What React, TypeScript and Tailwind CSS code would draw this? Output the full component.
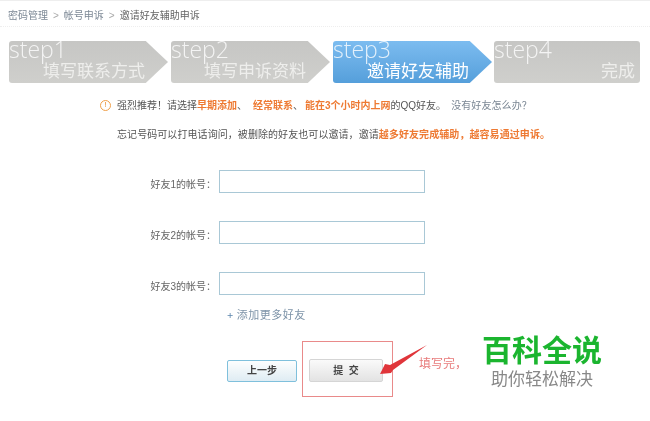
const cjk = "font-['Liberation_Sans','Noto_Sans_CJK_SC',sans-serif]";

const Step = ({ name, label, active, last, width, labelPos }: any) => {
  return (
    <div
      className={`relative h-[42px] shrink-0 overflow-hidden rounded-[3px] text-white ${width} ${
        last ? "" : "[clip-path:polygon(0_0,86%_0,100%_50%,86%_100%,0_100%)]"
      } ${active ? "bg-gradient-to-b from-[#7cbcf0] to-[#559fdb]" : "bg-gradient-to-b from-[#c6c6c4] to-[#cfcfcc]"}`}
    >
      <div className="absolute left-0 top-0 text-[23px] leading-[17px] font-['Open_Sans',sans-serif] font-light opacity-80">
        {name}
      </div>
      <div className={`absolute bottom-[2px] text-[17px] leading-[18px] ${labelPos} ${active ? "text-white" : "text-[#eeeeec]"}`}>
        {label}
      </div>
    </div>
  );
};

const FriendRow = ({ n }: any) => {
  return (
    <div className="flex h-[23px] items-center">
      <div className="w-[216px] pt-[5px] text-right text-[10px] text-[#666666]">好友{n}的帐号：</div>
      <div className="ml-[3px] h-[23px] w-[206px] border border-[#a9c8d6] bg-white"></div>
    </div>
  );
};

export default function App() {
  return (
    <div className={`relative h-[421px] w-[650px] overflow-hidden bg-white blur-[0.3px] ${cjk}`}>
      <div className="h-[26px] border-t border-[#eeeeee] pl-[8px] pt-[9px]">
        <div className="flex items-center text-[10px] leading-[12px] text-[#7b8794]">
          <span>密码管理</span>
          <span className="mx-[5px] text-[#aaaaaa]">&gt;</span>
          <span>帐号申诉</span>
          <span className="mx-[5px] text-[#aaaaaa]">&gt;</span>
          <span className="text-[#666666]">邀请好友辅助申诉</span>
        </div>
      </div>
      <div className="border-t border-dotted border-[#eeeeee]"></div>

      <div className="mt-[14px] flex pl-[9px]">
        <Step name="step1" label="填写联系方式" width="w-[159px]" labelPos="right-[23px]" />
        <div className="w-[3px]"></div>
        <Step name="step2" label="填写申诉资料" width="w-[159px]" labelPos="right-[24px]" />
        <div className="w-[3px]"></div>
        <Step name="step3" label="邀请好友辅助" width="w-[159px]" labelPos="right-[23px]" active />
        <div className="w-[2px]"></div>
        <Step name="step4" label="完成" width="w-[146px]" labelPos="right-[5px]" last />
      </div>

      <div className="mt-[15px] flex h-[14px] items-center pl-[100px] text-[10px] text-[#555555]">
        <span className="mr-[6px] flex h-[11px] w-[11px] items-center justify-center rounded-full border border-[#f0a04a] text-[8px] leading-none text-[#e88a2c]">!</span>
        <span>强烈推荐！请选择</span>
        <span className="font-bold text-[#ee7a33]">早期添加</span>
        <span className="mr-[6px]">、</span>
        <span className="font-bold text-[#ee7a33]">经常联系</span>
        <span className="mr-[2px]">、</span>
        <span className="font-bold text-[#ee7a33]">能在3个小时内上网</span>
        <span>的QQ好友。</span>
        <span className="ml-[5px] tracking-[0.1px] text-[#7b8794]">没有好友怎么办？</span>
      </div>

      <div className="mt-[15px] flex h-[14px] items-center pl-[117px] text-[10px] tracking-[0.07px] text-[#555555]">
        <span>忘记号码可以打电话询问，被删除的好友也可以邀请，邀请</span>
        <span className="font-bold text-[#ee7a33]">越多好友完成辅助，越容易通过申诉。</span>
      </div>

      <div className="mt-[29px] flex flex-col gap-[28px]">
        <FriendRow n={1} />
        <FriendRow n={2} />
        <FriendRow n={3} />
      </div>

      <div className="mt-[13px] pl-[227px] font-['Liberation_Serif','Noto_Sans_CJK_SC',serif] text-[11px] leading-[14px] tracking-[0.5px] text-[#7d93a8]">
        <span className="mr-[3px] font-bold text-[#5d86ad]">+</span>添加更多好友
      </div>

      <div className="mt-[37px] flex items-center pl-[227px]">
        <button className="h-[22px] w-[70px] rounded-[2px] border border-[#7fc0dc] bg-gradient-to-b from-[#fdfefe] to-[#dfecf3] text-[10px] font-bold text-[#444444]">
          上一步
        </button>
        <button className="ml-[12px] h-[23px] w-[74px] rounded-[2px] border border-[#d5d5d5] bg-gradient-to-b from-[#fafafa] to-[#e3e3e3] text-[10px] font-bold text-[#444444]">
          提 &nbsp;交
        </button>
      </div>

      {/* annotation on top of the page */}
      <div className="absolute left-[302px] top-[341px] h-[56px] w-[91px] border border-[#e98a8a]"></div>
      <svg className="absolute left-[376px] top-[342px]" width="52" height="36" viewBox="0 0 52 36">
        <path d="M51 3 L14 23 L9 22 L4 32 L15 31 L17 28 Z" fill="#e0353a" />
      </svg>
      <div className="absolute left-[419px] top-[357px] text-[12px] leading-[15px] text-[#e87a7a]">填写完，</div>

      {/* watermark */}
      <div className="absolute left-[462px] top-[330px] flex h-[70px] w-[160px] flex-col items-center bg-white pt-[4px]">
        <div className="text-[30px] font-bold leading-[34px] text-[#1bb52f]">百科全说</div>
        <div className="mt-[1px] text-[17px] leading-[22px] text-[#888888]">助你轻松解决</div>
      </div>
    </div>
  );
}
